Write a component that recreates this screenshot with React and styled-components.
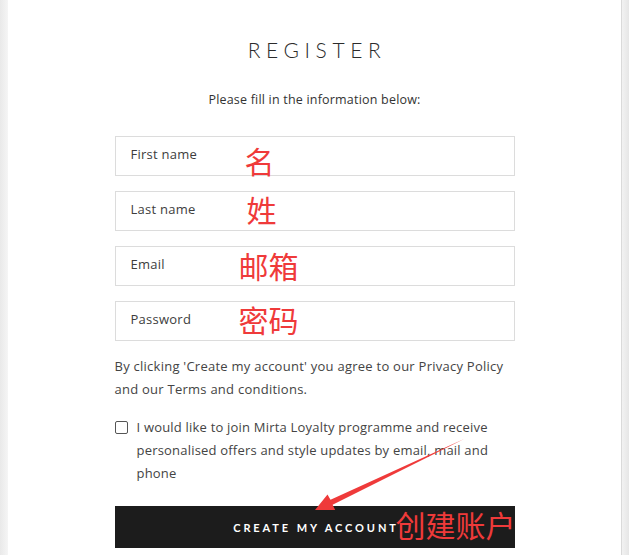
import React from "react";
import styled, { createGlobalStyle } from "styled-components";

const GlobalStyle = createGlobalStyle`
  * { box-sizing: border-box; }
  body {
    margin: 0;
    background: #ededed;
    font-family: "Open Sans", Lato, sans-serif;
    color: #3a3a3a;
  }
`;

const fields = [
  { placeholder: "First name", note: "名", top: 9, left: 130 },
  { placeholder: "Last name", note: "姓", top: 3, left: 132 },
  { placeholder: "Email", note: "邮箱", top: 4, left: 124 },
  { placeholder: "Password", note: "密码", top: 3, left: 124 },
];

const App = () => {
  return (
    <>
      <GlobalStyle />
      <Page>
        <Panel>
          <Form>
            <Title>REGISTER</Title>
            <Subtitle>Please fill in the information below:</Subtitle>
            <Fields>
              {fields.map((f) => (
                <Field key={f.placeholder}>
                  <Input type="text" placeholder={f.placeholder} />
                  <Note $top={f.top} $left={f.left}>
                    {f.note}
                  </Note>
                </Field>
              ))}
            </Fields>
            <Terms>
              By clicking 'Create my account' you agree to our Privacy Policy
              and our Terms and conditions.
            </Terms>
            <CheckRow>
              <Check type="checkbox" />
              <span>
                I would like to join Mirta Loyalty programme and receive
                personalised offers and style updates by email, mail and phone
              </span>
            </CheckRow>
            <Submit type="button">
              CREATE MY ACCOUNT
              <Note $top={3} $left={281}>
                创建账户
              </Note>
            </Submit>
          </Form>
          <Arrow width="629" height="555" viewBox="0 0 629 555">
            <polygon
              points="315,510 327.5,494.5 330.5,499.8 464,439 332.6,504.8 335.2,510"
              fill="#ef3a3a"
            />
          </Arrow>
        </Panel>
      </Page>
    </>
  );
};

export default App;

const Page = styled.div`
  width: 629px;
  height: 555px;
  overflow: hidden;
  padding: 0 7px 0 8px;
  background: linear-gradient(to right, #e9e9e9, #f5f5f5 8px, #f5f5f5 620px, #e6e6e6);
`;

const Panel = styled.div`
  position: relative;
  height: 100%;
  background: #fff;
  border-right: 1px solid #dadada;
`;

const Form = styled.div`
  width: 400px;
  margin: 0 auto;
  padding-top: 38px;
  display: flex;
  flex-direction: column;
`;

const Title = styled.h1`
  margin: 0;
  text-align: center;
  font-family: Lato, sans-serif;
  font-size: 21px;
  line-height: 24px;
  font-weight: 300;
  letter-spacing: 5.6px;
  padding-left: 5px;
  color: #2b2b2b;
`;

const Subtitle = styled.p`
  margin: 26px 0 0;
  text-align: center;
  font-size: 12.5px;
  letter-spacing: 0.2px;
  line-height: 23px;
  color: #333;
`;

const Fields = styled.div`
  margin-top: 25px;
  display: flex;
  flex-direction: column;
  gap: 15px;
`;

const Field = styled.div`
  position: relative;
  height: 40px;
`;

const Input = styled.input`
  width: 100%;
  height: 100%;
  border: 1px solid #dcdcdc;
  padding: 0 15px 4px;
  font-family: "Open Sans", Lato, sans-serif;
  font-size: 13px;
  letter-spacing: 0.25px;
  outline: none;
  &::placeholder {
    color: #3d3d3d;
  }
`;

const Note = styled.span`
  position: absolute;
  top: ${(p) => p.$top}px;
  left: ${(p) => p.$left}px;
  font-family: "Noto Sans CJK SC", sans-serif;
  font-size: 30px;
  line-height: 1;
  letter-spacing: 0;
  font-weight: 400;
  color: #ef3a3a;
  pointer-events: none;
  white-space: nowrap;
`;

const Terms = styled.p`
  margin: 14px 0 0;
  font-size: 13px;
  letter-spacing: 0.25px;
  line-height: 23px;
  color: #444;
`;

const CheckRow = styled.label`
  margin-top: 15px;
  display: flex;
  align-items: flex-start;
  gap: 9px;
  font-size: 13px;
  letter-spacing: 0.2px;
  line-height: 23px;
  color: #444;
`;

const Check = styled.input`
  appearance: none;
  flex: none;
  width: 13px;
  height: 13px;
  margin: 5px 0 0;
  border: 1px solid #555;
  border-radius: 2px;
  background: #fff;
`;

const Submit = styled.button`
  position: relative;
  margin-top: 21px;
  height: 42px;
  border: none;
  background: #1c1c1c;
  color: #fff;
  font-family: Lato, "Open Sans", sans-serif;
  font-size: 11px;
  font-weight: 700;
  letter-spacing: 2.9px;
  text-align: center;
  padding: 0 0 0 3px;
`;

const Arrow = styled.svg`
  position: absolute;
  top: 0;
  left: -8px;
  pointer-events: none;
`;
